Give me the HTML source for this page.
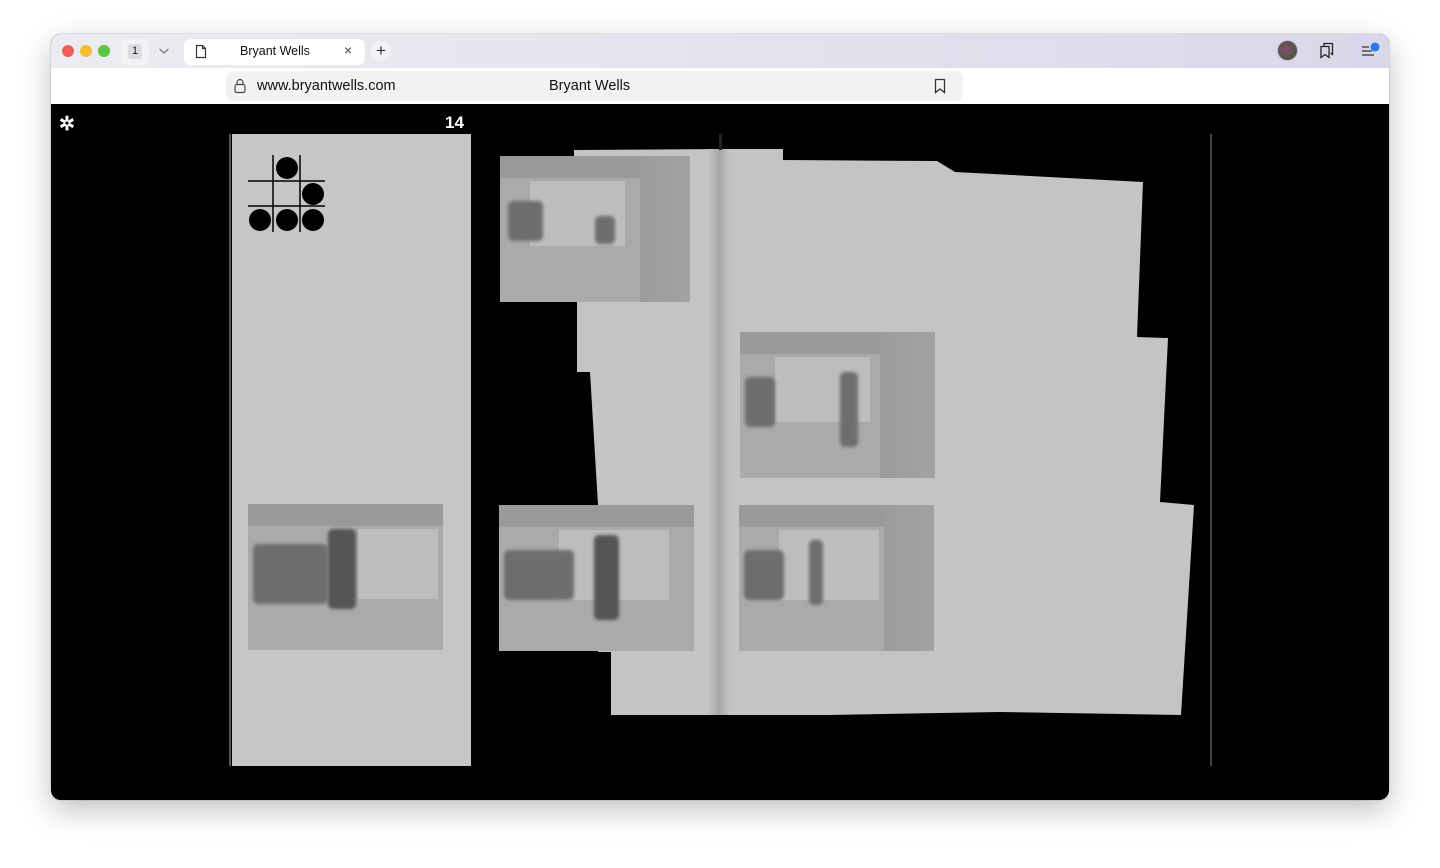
<!DOCTYPE html>
<html><head><meta charset="utf-8"><style>
*{margin:0;padding:0;box-sizing:border-box}
body{width:1440px;height:868px;background:#fff;position:relative;overflow:hidden;font-family:"Liberation Sans",sans-serif}
.win{position:absolute;left:51px;top:34px;width:1338px;height:766px;border-radius:10px;overflow:hidden;box-shadow:0 10px 30px rgba(0,0,0,.25),0 0 0 1px rgba(0,0,0,.08);background:#000}
.tabbar{position:absolute;left:0;top:0;width:100%;height:34px;background:linear-gradient(90deg,#ececf0 0%,#e3e3ee 50%,#d8d8ea 100%)}
.addr{position:absolute;left:0;top:34px;width:100%;height:36px;background:#fff}
.dot{position:absolute;top:11px;width:12px;height:12px;border-radius:50%}
.photo{position:absolute;background:#aaa;overflow:hidden}
.photo .door{position:absolute;background:#bdbdbd}
.photo .fig{position:absolute;background:#6e6e6e;border-radius:5px;filter:blur(1.5px)}
.photo .wall{position:absolute;background:linear-gradient(90deg,#9c9c9c,#a2a2a2)}
.photo .top{position:absolute;left:0;top:0;width:100%;height:22px;background:#9a9a9a}
</style></head><body>
<div class="win">
 <div class="tabbar">
  <div class="dot" style="left:11px;background:#ee5f57"></div>
  <div class="dot" style="left:29px;background:#f5bd2f"></div>
  <div class="dot" style="left:47px;background:#5fc53f"></div>
  <div style="position:absolute;left:70px;top:5px;width:28px;height:26px;border-radius:6px;background:#f3f3f5"></div>
  <div style="position:absolute;left:77px;top:10px;width:14px;height:15px;border-radius:3px;background:#dcdce0;font-size:11px;text-align:center;line-height:15px;color:#222">1</div>
  <svg style="position:absolute;left:107px;top:13px" width="12" height="8"><path d="M1.5 2l4.5 4 4.5-4" fill="none" stroke="#777" stroke-width="1.2"/></svg>
  <div style="position:absolute;left:133px;top:5px;width:181px;height:26px;border-radius:7px;background:#fff"></div>
  <svg style="position:absolute;left:144px;top:10px" width="12" height="15"><path d="M1.5 1.5h6l3 3v9h-9z M7.5 1.5v3h3" fill="none" stroke="#333" stroke-width="1.2"/></svg>
  <div style="position:absolute;left:189px;top:10px;font-size:12.5px;color:#111">Bryant Wells</div>
  <div style="position:absolute;left:293px;top:8px;font-size:14px;color:#444">×</div>
  <div style="position:absolute;left:320px;top:7px;width:20px;height:20px;border-radius:50%;background:#f3f3f6;text-align:center;line-height:19px;font-size:17px;color:#333">+</div>
  <div style="position:absolute;left:1226px;top:6px;width:21px;height:21px;border-radius:50%;background:radial-gradient(circle at 45% 45%,#8a4a7a,#4a5a3a 70%);border:1.5px solid #d8b0e0"></div>
  <svg style="position:absolute;left:1268px;top:8px" width="16" height="17"><path d="M5 4V1.5h8.5v11l-2-1.5 M2 4.5h8v11l-4-3-4 3z" fill="none" stroke="#222" stroke-width="1.3"/></svg>
  <svg style="position:absolute;left:1310px;top:8px" width="22" height="16"><path d="M1 5h7M1 9h10M1 13h12" stroke="#333" stroke-width="1.2"/><circle cx="14" cy="5" r="4.5" fill="#2a7ae6"/></svg>
 </div>
 <div class="addr">
  <div style="position:absolute;left:175px;top:3px;width:737px;height:30px;border-radius:7px;background:#f2f2f3"></div>
  <svg style="position:absolute;left:183px;top:10px" width="12" height="16"><rect x="1" y="6.5" width="10" height="8" rx="2" fill="none" stroke="#444" stroke-width="1.2"/><path d="M3 6.5V4.5a3 3 0 0 1 6 0v2" fill="none" stroke="#444" stroke-width="1.2"/></svg>
  <div style="position:absolute;left:206px;top:10px;font-size:14.5px;color:#111">www.bryantwells.com</div>
  <div style="position:absolute;left:498px;top:10px;font-size:14.5px;color:#111">Bryant Wells</div>
  <svg style="position:absolute;left:883px;top:10px" width="12" height="16"><path d="M1.5 1.5h9v13l-4.5-3.5-4.5 3.5z" fill="none" stroke="#333" stroke-width="1.3"/></svg>
 </div>
</div>
<div style="position:absolute;left:59px;top:113px;color:#fff;font-size:19px;font-weight:bold">✲</div>
<div style="position:absolute;left:445px;top:113px;color:#fff;font-size:17px;font-weight:bold">14</div>
<div style="position:absolute;left:229px;top:134px;width:2px;height:632px;background:#555"></div>
<div style="position:absolute;left:1210px;top:134px;width:2px;height:632px;background:#444"></div>
<div style="position:absolute;left:232px;top:134px;width:239px;height:632px;background:#c6c6c6"></div>
<svg style="position:absolute;left:0;top:0" width="1440" height="868">
 <defs><linearGradient id="sp" x1="0" x2="1"><stop offset="0" stop-color="#c4c4c4"/><stop offset=".5" stop-color="#a6a6a6"/><stop offset="1" stop-color="#c4c4c4"/></linearGradient></defs>
 <polygon fill="#c4c4c4" points="574,150 720,149 783,149 783,160 937,161 955,172 1143,182 1137,337 1168,338 1160,502 1194,505 1181,715 1000,712 828,715 611,715 611,652 598,652 598,505 590,372 577,372 577,302 574,302"/>
 <rect x="708" y="149" width="22" height="566" fill="url(#sp)"/>
 <rect x="719" y="134" width="3" height="16" fill="#222"/>
 <line x1="248" y1="181" x2="325" y2="181" stroke="#000" stroke-width="1.5"/>
 <line x1="248" y1="206" x2="325" y2="206" stroke="#000" stroke-width="1.5"/>
 <line x1="273" y1="155" x2="273" y2="232" stroke="#000" stroke-width="1.5"/>
 <line x1="300" y1="155" x2="300" y2="232" stroke="#000" stroke-width="1.5"/>
 <circle cx="287" cy="168" r="11" fill="#000"/>
 <circle cx="313" cy="194" r="11" fill="#000"/>
 <circle cx="260" cy="220" r="11" fill="#000"/>
 <circle cx="287" cy="220" r="11" fill="#000"/>
 <circle cx="313" cy="220" r="11" fill="#000"/>
</svg>
<div class="photo" style="left:500px;top:156px;width:190px;height:146px"><div class="top"></div><div class="door" style="left:30px;top:25px;width:95px;height:65px"></div><div class="wall" style="left:140px;top:0;width:50px;height:146px"></div><div class="fig" style="left:8px;top:45px;width:35px;height:40px"></div><div class="fig" style="left:95px;top:60px;width:20px;height:28px"></div></div>
<div class="photo" style="left:740px;top:332px;width:195px;height:146px"><div class="top"></div><div class="door" style="left:35px;top:25px;width:95px;height:65px"></div><div class="wall" style="left:140px;top:0;width:55px;height:146px"></div><div class="fig" style="left:5px;top:45px;width:30px;height:50px"></div><div class="fig" style="left:100px;top:40px;width:18px;height:75px"></div></div>
<div class="photo" style="left:499px;top:505px;width:195px;height:146px"><div class="top"></div><div class="door" style="left:60px;top:25px;width:110px;height:70px"></div><div class="fig" style="left:5px;top:45px;width:70px;height:50px"></div><div class="fig" style="left:95px;top:30px;width:25px;height:85px;background:#555"></div></div>
<div class="photo" style="left:739px;top:505px;width:195px;height:146px"><div class="top"></div><div class="door" style="left:40px;top:25px;width:100px;height:70px"></div><div class="wall" style="left:145px;top:0;width:50px;height:146px"></div><div class="fig" style="left:5px;top:45px;width:40px;height:50px"></div><div class="fig" style="left:70px;top:35px;width:14px;height:65px"></div></div>
<div class="photo" style="left:248px;top:504px;width:195px;height:146px"><div class="top"></div><div class="door" style="left:110px;top:25px;width:80px;height:70px"></div><div class="fig" style="left:5px;top:40px;width:75px;height:60px"></div><div class="fig" style="left:80px;top:25px;width:28px;height:80px;background:#555"></div></div>
</body></html>
